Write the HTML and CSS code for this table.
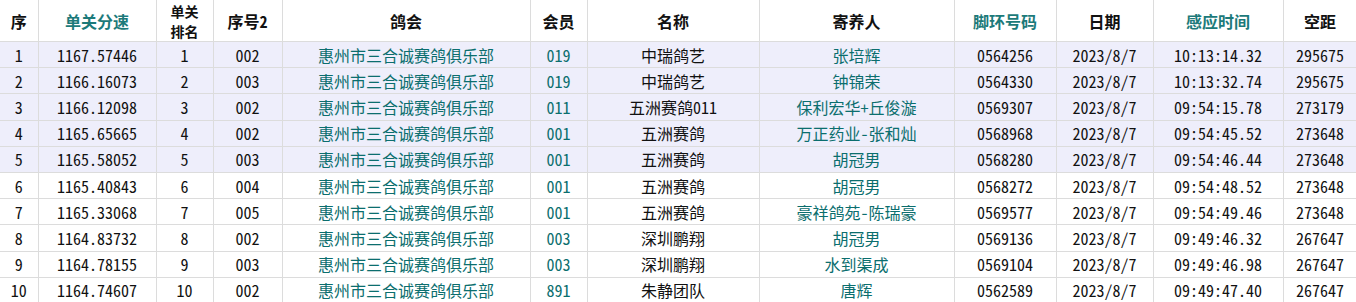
FILE: index.html
```html
<!DOCTYPE html>
<html lang="zh">
<head>
<meta charset="utf-8">
<link rel="stylesheet" href="styles.css">
</head>
<body>
<table class="grid">
  <colgroup>
    <col class="c1"><col class="c2"><col class="c3"><col class="c4"><col class="c5"><col class="c6">
    <col class="c7"><col class="c8"><col class="c9"><col class="c10"><col class="c11"><col class="c12">
  </colgroup>
  <thead>
    <tr>
      <th>序</th><th class="sort">单关分速</th><th class="two">单关<br>排名</th><th>序号2</th><th>鸽会</th><th>会员</th>
      <th>名称</th><th>寄养人</th><th class="sort">脚环号码</th><th>日期</th><th class="sort">感应时间</th><th>空距</th>
    </tr>
  </thead>
  <tbody>
    <tr class="hl"><td>1</td><td>1167.57446</td><td>1</td><td>002</td><td class="link">惠州市三合诚赛鸽俱乐部</td><td class="link">019</td><td>中瑞鸽艺</td><td class="link">张培辉</td><td>0564256</td><td>2023/8/7</td><td>10:13:14.32</td><td>295675</td></tr>
    <tr class="hl"><td>2</td><td>1166.16073</td><td>2</td><td>003</td><td class="link">惠州市三合诚赛鸽俱乐部</td><td class="link">019</td><td>中瑞鸽艺</td><td class="link">钟锦荣</td><td>0564330</td><td>2023/8/7</td><td>10:13:32.74</td><td>295675</td></tr>
    <tr class="hl"><td>3</td><td>1166.12098</td><td>3</td><td>002</td><td class="link">惠州市三合诚赛鸽俱乐部</td><td class="link">011</td><td>五洲赛鸽011</td><td class="link">保利宏华+丘俊漩</td><td>0569307</td><td>2023/8/7</td><td>09:54:15.78</td><td>273179</td></tr>
    <tr class="hl"><td>4</td><td>1165.65665</td><td>4</td><td>002</td><td class="link">惠州市三合诚赛鸽俱乐部</td><td class="link">001</td><td>五洲赛鸽</td><td class="link">万正药业-张和灿</td><td>0568968</td><td>2023/8/7</td><td>09:54:45.52</td><td>273648</td></tr>
    <tr class="hl"><td>5</td><td>1165.58052</td><td>5</td><td>003</td><td class="link">惠州市三合诚赛鸽俱乐部</td><td class="link">001</td><td>五洲赛鸽</td><td class="link">胡冠男</td><td>0568280</td><td>2023/8/7</td><td>09:54:46.44</td><td>273648</td></tr>
    <tr><td>6</td><td>1165.40843</td><td>6</td><td>004</td><td class="link">惠州市三合诚赛鸽俱乐部</td><td class="link">001</td><td>五洲赛鸽</td><td class="link">胡冠男</td><td>0568272</td><td>2023/8/7</td><td>09:54:48.52</td><td>273648</td></tr>
    <tr><td>7</td><td>1165.33068</td><td>7</td><td>005</td><td class="link">惠州市三合诚赛鸽俱乐部</td><td class="link">001</td><td>五洲赛鸽</td><td class="link">豪祥鸽苑-陈瑞豪</td><td>0569577</td><td>2023/8/7</td><td>09:54:49.46</td><td>273648</td></tr>
    <tr><td>8</td><td>1164.83732</td><td>8</td><td>002</td><td class="link">惠州市三合诚赛鸽俱乐部</td><td class="link">003</td><td>深圳鹏翔</td><td class="link">胡冠男</td><td>0569136</td><td>2023/8/7</td><td>09:49:46.32</td><td>267647</td></tr>
    <tr><td>9</td><td>1164.78155</td><td>9</td><td>003</td><td class="link">惠州市三合诚赛鸽俱乐部</td><td class="link">003</td><td>深圳鹏翔</td><td class="link">水到渠成</td><td>0569104</td><td>2023/8/7</td><td>09:49:46.98</td><td>267647</td></tr>
    <tr><td>10</td><td>1164.74607</td><td>10</td><td>002</td><td class="link">惠州市三合诚赛鸽俱乐部</td><td class="link">891</td><td>朱静团队</td><td class="link">唐辉</td><td>0562589</td><td>2023/8/7</td><td>09:49:47.40</td><td>267647</td></tr>
  </tbody>
</table>
</body>
</html>
```

FILE: styles.css
```css
html, body {
  margin: 0;
  padding: 0;
  background: #ffffff;
}

.grid {
  border-collapse: collapse;
  table-layout: fixed;
  width: 1357px;
  font-family: "Noto Sans Mono CJK SC", "Noto Sans CJK SC", sans-serif;
  font-size: 16px;
  color: #111111;
}

.c1 { width: 38px; }
.c2 { width: 118px; }
.c3 { width: 57px; }
.c4 { width: 69px; }
.c5 { width: 248px; }
.c6 { width: 57px; }
.c7 { width: 172px; }
.c8 { width: 195px; }
.c9 { width: 102px; }
.c10 { width: 97px; }
.c11 { width: 130px; }
.c12 { width: 74px; }

.grid th,
.grid td {
  padding: 0;
  text-align: center;
  white-space: nowrap;
  overflow: hidden;
  border-right: 1px solid #dcdcdc;
  border-bottom: 1px solid #dcdcdc;
  line-height: 18px;
}

.grid th {
  height: 41px;
  font-weight: bold;
  color: #111111;
}

.grid th.two {
  font-size: 14px;
  line-height: 20px;
}

.grid th.sort {
  color: #1c7a7a;
}

.grid td {
  height: 25.2px;
}

.grid tr.hl td {
  background: #eeeefb;
}

.grid td.link {
  color: #0b6e6e;
}
```
